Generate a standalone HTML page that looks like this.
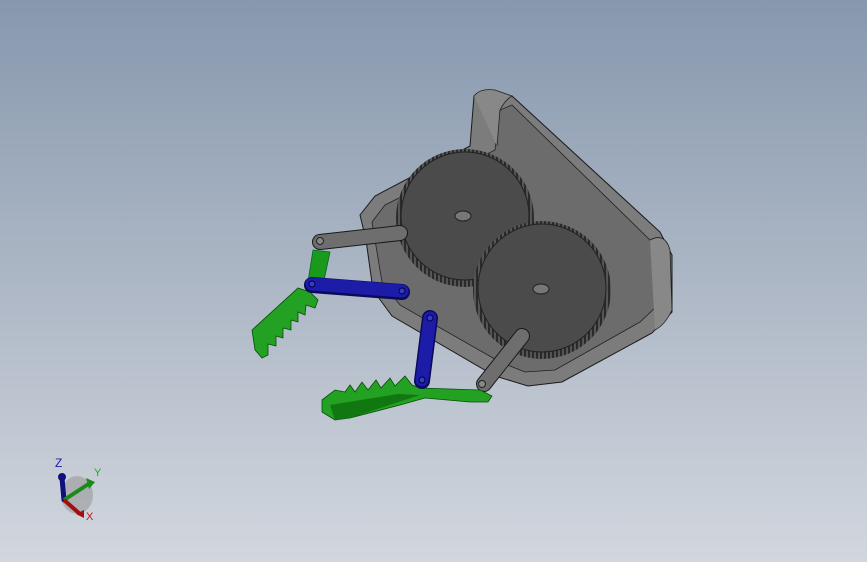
<!DOCTYPE html>
<html><head><style>
html,body{margin:0;padding:0}
body{width:867px;height:562px;overflow:hidden;background:linear-gradient(#8798ae 0%,#a9b4c3 45%,#d2d7de 100%);font-family:"Liberation Sans",sans-serif}
</style></head><body>
<svg width="867" height="562" viewBox="0 0 867 562" style="position:absolute;left:0;top:0">
<defs>
<pattern id="teeth" width="4" height="4" patternUnits="userSpaceOnUse"><rect width="4" height="4" fill="#555"/><rect width="2" height="4" fill="#2a2a2a"/></pattern>
</defs>
<!-- plate -->
<polygon points="360,215 375,196 470,146 474,96 512,96 660,232 672,255 672,312 652,333 562,382 528,386 495,376 392,316 373,290 366,240" fill="#7c7c7c" stroke="#1a1a1a" stroke-width="1"/>
<polygon points="372,222 385,205 475,160 495,150 500,110 512,105 650,240 658,255 658,305 640,322 555,370 525,372 500,362 400,305 382,282" fill="#6c6c6c" stroke="#222" stroke-width="0.8"/>
<path d="M474,96 Q480,88 495,90 L512,96 Q505,100 500,110 L497,146" fill="#888" stroke="#222" stroke-width="0.8"/>
<path d="M650,240 Q665,232 670,250 L672,310 Q665,325 655,330" fill="#888" stroke="#222" stroke-width="0.8"/>
<line x1="512" y1="96" x2="660" y2="232" stroke="#222" stroke-width="0.8"/>
<!-- gears -->
<circle cx="465" cy="218" r="69" fill="url(#teeth)"/>
<circle cx="465" cy="216" r="64" fill="#4b4b4b" stroke="#222"/>
<ellipse cx="463" cy="216" rx="8" ry="5" fill="#777" stroke="#222"/>
<circle cx="542" cy="290" r="69" fill="url(#teeth)"/>
<circle cx="542" cy="288" r="64" fill="#4b4b4b" stroke="#222"/>
<ellipse cx="541" cy="289" rx="8" ry="5" fill="#777" stroke="#222"/>
<!-- gray arms -->
<line x1="320" y1="242" x2="400" y2="233" stroke="#1a1a1a" stroke-width="16" stroke-linecap="round"/>
<line x1="320" y1="242" x2="400" y2="233" stroke="#6e6e6e" stroke-width="14" stroke-linecap="round"/>
<circle cx="320" cy="241" r="3.5" fill="#888" stroke="#222"/>
<line x1="484" y1="384" x2="522" y2="336" stroke="#1a1a1a" stroke-width="16" stroke-linecap="round"/>
<line x1="484" y1="384" x2="522" y2="336" stroke="#6e6e6e" stroke-width="14" stroke-linecap="round"/>
<circle cx="482" cy="384" r="3.5" fill="#888" stroke="#222"/>
<!-- green left jaw -->
<polygon points="313,250 330,252 322,290 307,288" fill="#1a9a1a" stroke="#063" stroke-width="0.8"/>
<polygon points="252,330 298,288 310,292 318,300 315,308 306,305 305,315 298,312 298,322 291,320 291,330 283,328 283,338 276,336 276,346 268,344 268,355 262,358 255,350" fill="#22a122" stroke="#064d06" stroke-width="0.8"/>
<!-- green bottom jaw -->
<polygon points="322,400 335,390 345,392 350,385 355,392 362,382 368,390 376,380 381,388 390,378 395,386 405,376 412,385 420,388 480,390 492,396 488,402 470,402 425,398 400,405 350,418 335,420 322,412" fill="#22a122" stroke="#064d06" stroke-width="0.8"/>
<polygon points="330,405 398,394 420,395 350,418 335,420" fill="#117711"/>
<!-- blue links -->
<line x1="312" y1="285" x2="402" y2="292" stroke="#0a0a5a" stroke-width="16" stroke-linecap="round"/>
<line x1="312" y1="284" x2="402" y2="291" stroke="#1c1ca8" stroke-width="13" stroke-linecap="round"/>
<circle cx="312" cy="284" r="3" fill="#3a3ac8" stroke="#000040"/>
<circle cx="402" cy="291" r="3" fill="#3a3ac8" stroke="#000040"/>
<line x1="430" y1="318" x2="422" y2="381" stroke="#0a0a5a" stroke-width="16" stroke-linecap="round"/>
<line x1="430" y1="318" x2="422" y2="380" stroke="#1c1ca8" stroke-width="13" stroke-linecap="round"/>
<circle cx="430" cy="318" r="3" fill="#3a3ac8" stroke="#000040"/>
<circle cx="422" cy="380" r="3" fill="#3a3ac8" stroke="#000040"/>
<!-- triad -->
<ellipse cx="77" cy="495" rx="16" ry="19" fill="#9a9a9a" opacity="0.6"/>
<line x1="62" y1="478" x2="64" y2="500" stroke="#10107a" stroke-width="5" stroke-linecap="round"/>
<circle cx="62" cy="477" r="4" fill="#10107a"/>
<line x1="64" y1="500" x2="90" y2="483" stroke="#1b8a1b" stroke-width="4"/>
<polygon points="86,478 95,482 89,489" fill="#1b8a1b"/>
<line x1="64" y1="500" x2="80" y2="514" stroke="#a01010" stroke-width="4"/>
<polygon points="76,514 84,510 84,518" fill="#a01010"/>
<text x="55" y="467" font-size="12" fill="#1a1ab0">Z</text>
<text x="94" y="476" font-size="11" fill="#18b018">Y</text>
<text x="86" y="520" font-size="11" fill="#d01010">X</text>
</svg>
</body></html>
